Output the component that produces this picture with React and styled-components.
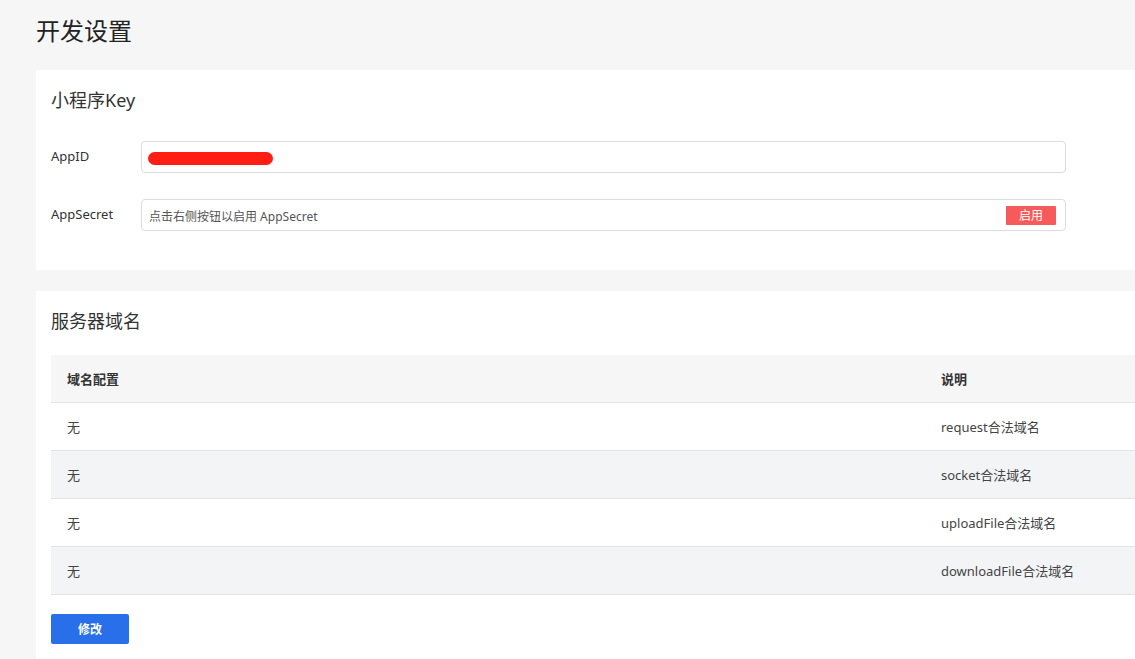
import React from "react";
import styled, { createGlobalStyle } from "styled-components";

const Global = createGlobalStyle`
  html, body { margin: 0; padding: 0; background: #f6f6f6; overflow: hidden; }
  body { font-family: "Noto Sans", "Noto Sans CJK SC", sans-serif; color: #333; }
`;

const Page = styled.div`
  padding: 13px 0 0 36px;
  width: 1130px;
`;

const PageTitle = styled.h1`
  margin: 0 0 22px;
  font-size: 24px;
  font-weight: 400;
  line-height: 35px;
  color: #222;
`;

const Card = styled.section`
  background: #fff;
  padding: 16px 15px ${(p) => p.$pb || 0}px;
  margin-bottom: ${(p) => p.$mb || 0}px;
`;

const CardTitle = styled.h2`
  margin: 0 0 ${(p) => p.$mb}px;
  font-size: 18px;
  font-weight: 400;
  line-height: 28px;
  color: #333;
`;

const FormRow = styled.div`
  display: flex;
  align-items: center;
  margin-bottom: ${(p) => p.$mb || 0}px;
`;

const Label = styled.label`
  width: 90px;
  font-size: 13px;
  color: #333;
  margin-top: -2px;
`;

const Input = styled.div`
  box-sizing: border-box;
  width: 925px;
  height: 32px;
  border: 1px solid #dcdcdc;
  border-radius: 4px;
  display: flex;
  align-items: center;
  justify-content: space-between;
  padding: 0 9px 0 6px;
`;

const Redacted = styled.span`
  display: inline-block;
  width: 125px;
  height: 13px;
  border-radius: 7px;
  background: #fe1e14;
  margin-top: 2px;
`;

const Placeholder = styled.span`
  font-size: 12px;
  color: #555;
  margin-left: 1px;
  margin-top: 1px;
`;

const EnableButton = styled.button`
  border: none;
  background: #f75a5a;
  color: #fff;
  font-family: inherit;
  font-size: 12px;
  width: 50px;
  height: 19px;
  padding: 0;
  border-radius: 1px;
  line-height: 19px;
`;

const Table = styled.div`
  width: 1090px;
  display: grid;
  grid-template-columns: 874px 1fr;
`;

const Cell = styled.div`
  height: 48px;
  box-sizing: border-box;
  display: flex;
  align-items: center;
  padding-left: 16px;
  font-size: 13px;
  color: ${(p) => (p.$head ? "#333" : "#444")};
  font-weight: ${(p) => (p.$head ? 700 : 400)};
  background: ${(p) => (p.$head ? "#f6f6f6" : p.$alt ? "#f3f4f6" : "#fff")};
  border-bottom: 1px solid #e4e4e4;
`;

const PrimaryButton = styled.button`
  margin: 19px 0 0;
  width: 78px;
  height: 30px;
  border: none;
  border-radius: 2px;
  background: #2a6fea;
  color: #fff;
  font-family: inherit;
  font-size: 12px;
  font-weight: 700;
`;

const rows = [
  ["无", "request合法域名"],
  ["无", "socket合法域名"],
  ["无", "uploadFile合法域名"],
  ["无", "downloadFile合法域名"],
];

export default function App() {
  return (
    <>
      <Global />
      <Page>
        <PageTitle>开发设置</PageTitle>
        <Card $pb={39} $mb={21}>
          <CardTitle $mb={27}>小程序Key</CardTitle>
          <FormRow $mb={26}>
            <Label>AppID</Label>
            <Input>
              <Redacted />
            </Input>
          </FormRow>
          <FormRow>
            <Label>AppSecret</Label>
            <Input>
              <Placeholder>点击右侧按钮以启用 AppSecret</Placeholder>
              <EnableButton>启用</EnableButton>
            </Input>
          </FormRow>
        </Card>
        <Card $pb={20}>
          <CardTitle $mb={20}>服务器域名</CardTitle>
          <Table>
            <Cell $head>域名配置</Cell>
            <Cell $head>说明</Cell>
            {rows.map(([a, b], i) => (
              <React.Fragment key={i}>
                <Cell $alt={i % 2 === 1}>{a}</Cell>
                <Cell $alt={i % 2 === 1}>{b}</Cell>
              </React.Fragment>
            ))}
          </Table>
          <PrimaryButton>修改</PrimaryButton>
        </Card>
      </Page>
    </>
  );
}
